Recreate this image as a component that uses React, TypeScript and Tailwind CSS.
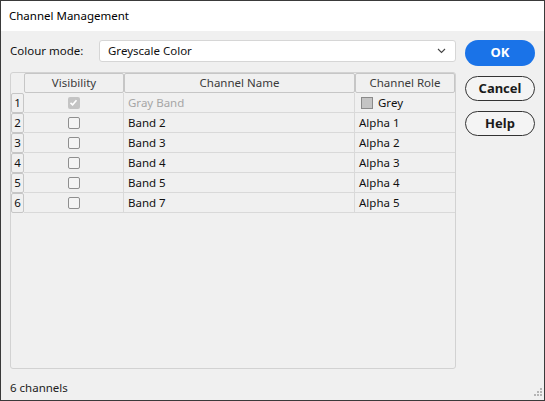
const rows = [
  { n: 1, name: "Gray Band", role: "Grey", primary: true },
  { n: 2, name: "Band 2", role: "Alpha 1" },
  { n: 3, name: "Band 3", role: "Alpha 2" },
  { n: 4, name: "Band 4", role: "Alpha 3" },
  { n: 5, name: "Band 5", role: "Alpha 4" },
  { n: 6, name: "Band 7", role: "Alpha 5" },
];

function HeaderCell({ label, className }: { label: string; className: string }) {
  return (
    <div
      className={`flex h-[20px] items-center justify-center rounded-[2px] border border-[#c6c6c6] text-[#3a3a3a] ${className}`}
    >
      {label}
    </div>
  );
}

function Checkbox({ checked }: { checked?: boolean }) {
  if (checked) {
    return (
      <div className="flex h-[12px] w-[12px] items-center justify-center rounded-[2px] bg-[#c4c4c4]">
        <svg width="9" height="9" viewBox="0 0 9 9">
          <polyline points="1.5,4.8 3.6,6.8 7.5,2.2" fill="none" stroke="#fff" strokeWidth="1.6" />
        </svg>
      </div>
    );
  }
  return <div className="h-[12px] w-[12px] rounded-[2px] border border-[#8f8f8f] bg-[#f4f4f4]" />;
}

export default function App() {
  return (
    <div
      className="relative flex h-[401px] w-[545px] flex-col border border-[#3a3a3a] bg-[#f0f0f0] text-[11.5px] text-[#111]"
      style={{ fontFamily: '"Noto Sans", "Open Sans", sans-serif' }}
    >
      <div className="flex h-[30px] items-center bg-white px-[8px] text-[11.5px] text-black">
        Channel Management
      </div>

      <div className="flex flex-1 gap-[9px] pl-[9px] pt-[9px]">
        <div className="flex w-[446px] flex-col">
          <div className="flex h-[22px] items-center">
            <span className="w-[89px]">Colour mode:</span>
            <div className="flex h-[22px] flex-1 items-center justify-between rounded-[3px] border border-[#d6d6d6] bg-white pl-[8px] pr-[9px]">
              <span>Greyscale Color</span>
              <svg width="9" height="6" viewBox="0 0 9 6">
                <polyline points="1,1 4.5,4.5 8,1" fill="none" stroke="#444" strokeWidth="1.1" />
              </svg>
            </div>
          </div>

          <div className="mt-[10px] flex h-[297px] flex-col rounded-[3px] border border-[#d2d2d2]">
            <div className="flex">
              <div className="w-[13px]" />
              <HeaderCell label="Visibility" className="w-[100px]" />
              <HeaderCell label="Channel Name" className="w-[231px]" />
              <HeaderCell label="Channel Role" className="w-[100px]" />
            </div>
            {rows.map((r) => (
              <div key={r.n} className="flex h-[20px]">
                <div className="flex w-[13px] items-center justify-center rounded-[2px] border border-[#c6c6c6]">
                  {r.n}
                </div>
                <div className="flex w-[100px] items-center justify-center border-b border-r border-[#d9d9d9]">
                  <Checkbox checked={r.primary} />
                </div>
                <div
                  className={`flex w-[231px] items-center border-b border-r border-[#d9d9d9] pl-[4px] ${
                    r.primary ? "text-[#a6a6a6]" : ""
                  }`}
                >
                  {r.name}
                </div>
                <div className="flex w-[100px] items-center border-b border-[#d9d9d9] pl-[4px]">
                  {r.primary ? (
                    <>
                      <div className="mr-[5px] ml-[2px] h-[12px] w-[12px] border border-[#8a8a8a] bg-[#c4c4c4]" />
                      Grey
                    </>
                  ) : (
                    r.role
                  )}
                </div>
              </div>
            ))}
          </div>

          <div className="mt-[10px] text-[#222]">6 channels</div>
        </div>

        <div className="flex w-[70px] flex-col gap-[10px]">
          <button className="h-[26px] rounded-full bg-[#1a73e8] text-[13px] font-bold text-white">OK</button>
          <button className="h-[25px] rounded-full border border-[#333] bg-[#f4f4f4] text-[13px] font-bold text-[#1b1b1b]">
            Cancel
          </button>
          <button className="h-[25px] rounded-full border border-[#333] bg-[#f4f4f4] text-[13px] font-bold text-[#1b1b1b]">
            Help
          </button>
        </div>
      </div>

      <svg className="absolute bottom-[2px] right-[2px]" width="10" height="10" viewBox="0 0 10 10">
        <rect x="8" y="0" width="2" height="2" fill="#b5b5b5" />
        <rect x="5" y="3" width="2" height="2" fill="#b5b5b5" />
        <rect x="8" y="3" width="2" height="2" fill="#b5b5b5" />
        <rect x="2" y="6" width="2" height="2" fill="#b5b5b5" />
        <rect x="5" y="6" width="2" height="2" fill="#b5b5b5" />
        <rect x="8" y="6" width="2" height="2" fill="#b5b5b5" />
      </svg>
    </div>
  );
}
